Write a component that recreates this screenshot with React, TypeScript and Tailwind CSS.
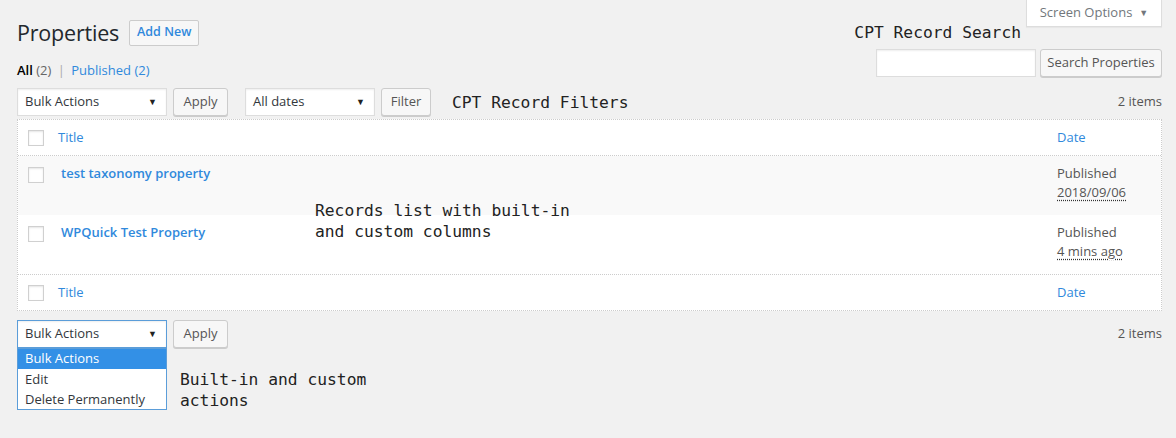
import React from "react";

const font = { fontFamily: '"Open Sans", "Noto Sans", sans-serif' };

function Select({ label, width, focused }: { label: string; width: string; focused?: boolean }) {
  return (
    <div
      className={`${width} h-[28px] bg-white flex items-center justify-between pl-[7px] pr-[9px] text-[13px] text-[#32373c] border ${
        focused ? "border-[#5b9dd9]" : "border-[#ddd]"
      } shadow-[inset_0_1px_2px_rgba(0,0,0,0.07)]`}
    >
      <span>{label}</span>
      <span className="text-[9px] text-[#222]">▼</span>
    </div>
  );
}

function Button({ children, width }: { children: React.ReactNode; width: string }) {
  return (
    <div
      className={`${width} h-[28px] flex items-center justify-center bg-[#f7f7f7] border border-[#ccc] rounded-[3px] shadow-[0_1px_0_#ccc] text-[13px] text-[#555]`}
    >
      {children}
    </div>
  );
}

function Checkbox() {
  return <div className="w-[16px] h-[16px] bg-white border border-[#d0d0d0] shadow-[inset_0_1px_2px_rgba(0,0,0,0.1)]" />;
}

const mono = "font-['DejaVu_Sans_Mono',monospace] text-[16.3px] leading-[21px] text-[#222]";

export default function App() {
  return (
    <div className="relative w-[1176px] h-[438px] bg-[#f1f1f1] overflow-hidden" style={font}>
      {/* Screen Options tab */}
      <div className="absolute right-[14px] top-0 w-[136px] h-[27px] bg-white border border-t-0 border-[#ddd] shadow-[0_1px_1px_rgba(0,0,0,0.04)] flex items-center justify-center gap-[7px] text-[13px] text-[#72777c]">
        <span>Screen Options</span>
        <span className="text-[9px]">▼</span>
      </div>

      <div className="pl-[17px] pr-[14px]">
        {/* Heading */}
        <div className="flex items-center gap-[10px] pt-[19px] h-[46px]">
          <h1 className="text-[21.5px] leading-[27px] text-[#23282d] font-normal tracking-[-0.2px]">Properties</h1>
          <div className="h-[26px] px-[7px] flex items-center bg-[#f7f7f7] border border-[#ccc] rounded-[2px] text-[12.5px] font-semibold text-[#3089dc]">
            Add New
          </div>
        </div>

        {/* Subsubsub + search */}
        <div className="flex justify-between mt-[3px] h-[28px]">
          <div className="pt-[11px] text-[13px] leading-[20px] text-[#666]">
            <span className="text-[#000] font-semibold">All</span> <span>(2)</span>{" "}
            <span className="px-[3px] text-[#aaa]">|</span>{" "}
            <span className="text-[#3089dc]">Published</span> <span className="text-[#3089dc]">(2)</span>
          </div>
          <div className="relative flex items-center gap-[4px]">
            <div className={`absolute right-[141px] top-[-27px] whitespace-nowrap ${mono}`}>CPT Record Search</div>
            <div className="w-[160px] h-[28px] bg-white border border-[#ddd] shadow-[inset_0_1px_2px_rgba(0,0,0,0.07)]" />
            <Button width="w-[122px]">Search Properties</Button>
          </div>
        </div>

        {/* Top tablenav */}
        <div className="flex items-center mt-[11px] h-[28px]">
          <Select label="Bulk Actions" width="w-[150px]" />
          <div className="ml-[6px]">
            <Button width="w-[55px]">Apply</Button>
          </div>
          <div className="ml-[17px]">
            <Select label="All dates" width="w-[130px]" />
          </div>
          <div className="ml-[6px]">
            <Button width="w-[50px]">Filter</Button>
          </div>
          <div className={`ml-[21px] ${mono}`}>CPT Record Filters</div>
          <div className="ml-auto text-[13px] text-[#555]">2 items</div>
        </div>

        {/* Table */}
        <div className="relative mt-[3px] border border-dotted border-[#ccc] bg-white text-[13px]">
          {/* header */}
          <div className="flex h-[36px] items-center border-b border-dotted border-[#ccc]">
            <div className="w-[40px] pl-[10px]">
              <Checkbox />
            </div>
            <div className="flex-1 text-[#3089dc]">Title</div>
            <div className="w-[104px] text-[#3089dc]">Date</div>
          </div>
          {/* row 1 */}
          <div className="flex h-[59px] items-start bg-[#f9f9f9]">
            <div className="w-[40px] pl-[10px] pt-[11px]">
              <Checkbox />
            </div>
            <div className="flex-1 pl-[3px] pt-[8px] font-semibold text-[#3089dc]">test taxonomy property</div>
            <div className="w-[104px] pt-[8px] text-[#555] leading-[19px]">
              <div>Published</div>
              <div className="inline underline decoration-dotted underline-offset-[3px] decoration-[#333]">2018/09/06</div>
            </div>
          </div>
          {/* row 2 */}
          <div className="flex h-[60px] items-start bg-white border-b border-dotted border-[#ccc]">
            <div className="w-[40px] pl-[10px] pt-[11px]">
              <Checkbox />
            </div>
            <div className="flex-1 pl-[3px] pt-[8px] font-semibold text-[#3089dc]">WPQuick Test Property</div>
            <div className="w-[104px] pt-[8px] text-[#555] leading-[19px]">
              <div>Published</div>
              <div className="inline underline decoration-dotted underline-offset-[3px] decoration-[#333]">4 mins ago</div>
            </div>
          </div>
          {/* footer */}
          <div className="flex h-[35px] items-center">
            <div className="w-[40px] pl-[10px]">
              <Checkbox />
            </div>
            <div className="flex-1 text-[#3089dc]">Title</div>
            <div className="w-[104px] text-[#3089dc]">Date</div>
          </div>

          <div className={`absolute left-[297px] top-[80px] ${mono}`}>
            <div>Records list with built-in</div>
            <div>and custom columns</div>
          </div>
        </div>

        {/* Bottom tablenav */}
        <div className="flex items-center mt-[9px] h-[28px]">
          <div className="relative">
            <Select label="Bulk Actions" width="w-[150px]" focused />
            <div className="absolute left-0 top-[28px] w-[150px] bg-white border border-[#5b9dd9] text-[13px] text-[#32373c] leading-[20px]">
              <div className="bg-[#3390e6] text-white pl-[7px] leading-[19px] pb-[1px]">Bulk Actions</div>
              <div className="pl-[7px]">Edit</div>
              <div className="pl-[7px]">Delete Permanently</div>
            </div>
          </div>
          <div className="ml-[6px]">
            <Button width="w-[55px]">Apply</Button>
          </div>
          <div className="ml-auto text-[13px] text-[#555]">2 items</div>
        </div>

        <div className={`ml-[163px] mt-[21px] ${mono}`}>
          <div>Built-in and custom</div>
          <div>actions</div>
        </div>
      </div>
    </div>
  );
}
